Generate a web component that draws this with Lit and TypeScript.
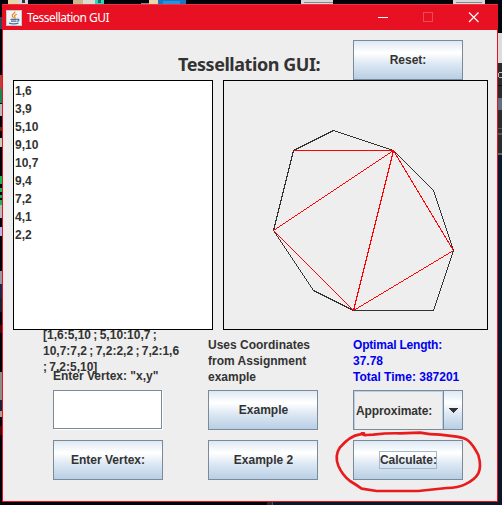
import { LitElement, html, css, svg } from "lit";
import { customElement } from "lit/decorators.js";

interface Block { x: number; y: number; w: number; h: number; c: string }

const vertices = ["1,6", "3,9", "5,10", "9,10", "10,7", "9,4", "7,2", "4,1", "2,2"];

// Slivers of the desktop that show around the window.
const desktop: Block[] = [
  { x: 8, y: 0, w: 11, h: 4, c: "#e8d8a8" }, { x: 18, y: 0, w: 10, h: 4, c: "#d5dade" },
  { x: 22, y: 0, w: 3, h: 3, c: "#334" },
  { x: 73, y: 0, w: 10, h: 4, c: "#c9b98c" }, { x: 83, y: 0, w: 13, h: 4, c: "#dcdcd4" },
  { x: 95, y: 0, w: 9, h: 4, c: "#2fd5bd" }, { x: 98, y: 0, w: 3, h: 3, c: "#176f66" },
  { x: 141, y: 3, w: 9, h: 1, c: "#888" },
  { x: 149, y: 0, w: 9, h: 4, c: "#e8d8a8" }, { x: 158, y: 0, w: 28, h: 4, c: "#1976c2" },
  { x: 163, y: 1, w: 17, h: 3, c: "#2b93dc" },
  { x: 301, y: 0, w: 32, h: 4, c: "#d8d8d8" }, { x: 304, y: 2, w: 29, h: 1, c: "#888" },
  { x: 453, y: 0, w: 32, h: 4, c: "#d8d8d8" }, { x: 456, y: 2, w: 26, h: 1, c: "#888" },
  { x: 0, y: 17, w: 2, h: 12, c: "#35435d" },
  { x: 0, y: 75, w: 2, h: 14, c: "#c33c3c" }, { x: 0, y: 89, w: 2, h: 14, c: "#168a50" },
  { x: 0, y: 104, w: 2, h: 12, c: "#bbb" }, { x: 0, y: 127, w: 2, h: 4, c: "#7a2200" },
  { x: 0, y: 138, w: 2, h: 9, c: "#c8d0b8" },
  { x: 0, y: 176, w: 2, h: 8, c: "#16b850" }, { x: 0, y: 188, w: 2, h: 4, c: "#16b850" },
  { x: 0, y: 195, w: 2, h: 3, c: "#16b850" }, { x: 0, y: 200, w: 2, h: 5, c: "#16b850" },
  { x: 0, y: 205, w: 2, h: 13, c: "#bbb" }, { x: 0, y: 227, w: 2, h: 9, c: "#b8b8e8" },
  { x: 0, y: 271, w: 2, h: 13, c: "#999" }, { x: 0, y: 284, w: 2, h: 14, c: "#1b2a4a" },
  { x: 0, y: 298, w: 2, h: 14, c: "#16222e" },
  { x: 0, y: 325, w: 2, h: 8, c: "#5a0000" }, { x: 0, y: 372, w: 2, h: 28, c: "#8e8e88" },
  { x: 0, y: 400, w: 2, h: 11, c: "#1a2438" }, { x: 0, y: 411, w: 2, h: 6, c: "#c09a8c" },
  { x: 0, y: 426, w: 2, h: 9, c: "#5a0000" },
  { x: 498, y: 0, w: 4, h: 32, c: "#02040c" }, { x: 498, y: 33, w: 4, h: 30, c: "#dcdcdc" },
  { x: 498, y: 63, w: 4, h: 92, c: "#2b2b2b" }, { x: 499, y: 72, w: 3, h: 1, c: "#bbb" },
  { x: 498, y: 73, w: 1, h: 4, c: "#bbb" }, { x: 499, y: 77, w: 3, h: 1, c: "#bbb" },
  { x: 498, y: 85, w: 4, h: 1, c: "#111" }, { x: 498, y: 98, w: 4, h: 12, c: "#607080" },
  { x: 498, y: 128, w: 4, h: 1, c: "#555" }, { x: 498, y: 133, w: 4, h: 2, c: "#555" },
  { x: 498, y: 153, w: 4, h: 2, c: "#666" },
  { x: 498, y: 155, w: 4, h: 350, c: "#0a1a2e" }, { x: 498, y: 350, w: 4, h: 155, c: "#0d1526" },
  { x: 273, y: 502, w: 229, h: 3, c: "#0d1624" }, { x: 267, y: 502, w: 5, h: 3, c: "#2c2828" },
  { x: 272, y: 502, w: 1, h: 3, c: "#555" },
];

const hull = "70,70 110,50 170,70 210,110 230,170 210,230 130,230 90,210 50,150";
const diagonals = ["70,70 170,70", "50,150 170,70", "50,150 130,230", "130,230 170,70", "130,230 230,170", "170,70 230,170"];

@customElement("app-root")
export class AppRoot extends LitElement {
  static styles = css`
    :host { display: block; position: relative; width: 502px; height: 505px; overflow: hidden;
      background: #020208; font: bold 12px/16px "Liberation Sans", Arial, sans-serif; color: #333; }
    * { box-sizing: border-box; }
    .desktop { position: absolute; inset: 0; }
    .window { position: relative; width: 496px; height: 498px; margin-left: 2px; top: 4px;
      border: 1px solid #e81123; border-top-color: #ee3344; background: #eee; }
    .titlebar { display: flex; align-items: center; height: 25px; background: #e81123; color: #fff;
      padding-left: 3px; font: 12px/16px "Noto Sans", "Open Sans", sans-serif; }
    .titlebar svg { display: block; flex: none; }
    .caption { margin-left: 5px; flex: 1; letter-spacing: -0.54px; white-space: nowrap; }
    .header { display: flex; height: 50px; padding: 10px 34px 0 175px; justify-content: space-between; }
    h1 { margin: 10px 0 0; font: bold 18px/28px "Noto Sans", "Open Sans", sans-serif; letter-spacing: -0.45px; white-space: nowrap; }
    .panels { display: grid; grid-template-columns: 200px 265px; gap: 10px; height: 250px; padding-left: 10px; }
    .list { margin: 0; padding: 1px 1px; list-style: none; background: #fff; border: 1px solid #000; line-height: 18px; }
    .plot { border: 1px solid #000; }
    .plot svg { display: block; margin: -1px; shape-rendering: crispEdges; }
    .form { display: grid; grid-template-columns: 155px 145px 110px; grid-template-rows: 50px 40px 40px;
      row-gap: 10px; padding-left: 50px; }
    .note { padding-top: 7px; white-space: nowrap; }
    .blue { color: #0000f0; }
    .tight { letter-spacing: -0.2px; }
    .entry { position: relative; padding-top: 38px; white-space: nowrap; }
    .result { position: absolute; left: -10px; top: -3px; word-spacing: -1px; }
    .button { display: flex; align-items: center; justify-content: center; width: 110px; height: 40px;
      margin: 0; padding: 0; border: 1px solid #7a8a99; font: inherit; color: inherit;
      background: linear-gradient(#dde8f3, #fff 30%, #fff 32%, #dde8f3 60%, #b8cfe5); }
    .nudge { padding-left: 1px; }
    .focus { width: 58px; border: 1px solid #a3b8cc; letter-spacing: -0.05px; white-space: nowrap; text-align: left; }
    .field { width: 109px; height: 39px; border: 1px solid #7a8a99; background: #fff; box-shadow: 1px 1px #fff; padding: 0; outline: 0; }
    .combo { display: flex; width: 110px; height: 40px; border: 1px solid #7a8a99; }
    .value { flex: 1; min-width: 0; display: flex; align-items: center; padding-left: 1px; border: 1px solid #b8cfe5; border-bottom: 0; letter-spacing: -0.1px; }
    .arrow { width: 19px; flex: none; display: grid; place-items: center; border-left: 1px solid #7a8a99;
      background: linear-gradient(#dde8f3, #fff 30%, #dde8f3 60%, #b8cfe5); }
    .ring { position: absolute; left: 330px; top: 425px; pointer-events: none; }
  `;

  render() {
    return html`
      <svg class="desktop" width="502" height="505" shape-rendering="crispEdges">
        ${desktop.map(b => svg`<rect x=${b.x} y=${b.y} width=${b.w} height=${b.h} fill=${b.c}></rect>`)}
      </svg>
      <div class="window">
        <div class="titlebar">
          <svg width="16" height="16" viewBox="0 0 16 16" fill="none">
            <rect x=".5" y=".5" width="15" height="15" fill="#f2f3f5" stroke="#c8cbd0"/>
            <path d="M8.800 1.500c1 1.700-3.400 2.800-2.600 4.600.3.700 1 1.200 1.400 1.900M10.800 4.300c-2 .9-2.900 1.700-1.800 3 .4.600.2 1-.4 1.500" stroke="#ee8524" stroke-width="1.200"/>
            <path d="M4.500 9.300h6.300M5 11.200h5.500M3 13.100c2.500 1.100 7.200 1 9.500-.1M11 9.400c2.500-.7 2.300 1.400.3 1.900" stroke="#47739b" stroke-width="1.300"/>
          </svg>
          <span class="caption">Tessellation GUI</span>
          <svg width="124" height="25" viewBox="0 0 124 25" fill="none" shape-rendering="crispEdges">
            <path d="M5 12.500h10" stroke="#fff"/>
            <rect x="50.500" y="7.500" width="9" height="9" stroke="#f04a58"/>
            <path d="M96 7.500l9.500 9.500M105.500 7.500l-9.500 9.500" stroke="#fff" stroke-width="1.200" shape-rendering="auto"/>
          </svg>
        </div>
        <div class="header"><h1>Tessellation GUI:</h1><button class="button">Reset:</button></div>
        <div class="panels">
          <ul class="list">${vertices.map(v => html`<li>${v}</li>`)}</ul>
          <div class="plot">
            <svg width="265" height="250" fill="none">
              <g transform="translate(.5 .5)">
                <polygon points=${hull} stroke="#333"/>
                ${diagonals.map(d => svg`<polyline points=${d} stroke="#f00"></polyline>`)}
              </g>
            </svg>
          </div>
        </div>
        <div class="form">
          <div class="entry">Enter Vertex: "x,y"
            <div class="result">[1,6:5,10 ; 5,10:10,7 ;<br>10,7:7,2 ; 7,2:2,2 ; 7,2:1,6<br>; 7,2:5,10]</div>
          </div>
          <div class="note">Uses Coordinates<br>from Assignment<br>example</div>
          <div class="note blue"><span class="tight">Optimal Length:</span><br>37.78<br>Total Time: 387201</div>
          <input class="field">
          <button class="button nudge">Example</button>
          <div class="combo"><span class="value">Approximate:</span><span class="arrow">
            <svg width="10" height="5" shape-rendering="crispEdges"><path d="M0 0h10l-5 5z" fill="#333"/></svg></span></div>
          <button class="button">Enter Vertex:</button>
          <button class="button nudge">Example 2</button>
          <button class="button"><span class="focus">Calculate:</span></button>
        </div>
      </div>
      <svg class="ring" width="160" height="75" viewBox="0 315 480 225" fill="none">
        <path d="M95 340Q98 346 110 345L130 344Q170 339 210 340L270 338Q300 344 330 344L380 350Q405 354 415 362Q430 375 445 405Q455 440 445 460Q435 479 405 493Q385 503 350 504L265 513H140L95 506Q78 494 60 483Q37 465 25 437Q13 407 30 382Q60 347 90 343L102 340" stroke="#e81c1c" stroke-width="8" stroke-linecap="round" stroke-linejoin="round"/>
      </svg>`;
  }
}
